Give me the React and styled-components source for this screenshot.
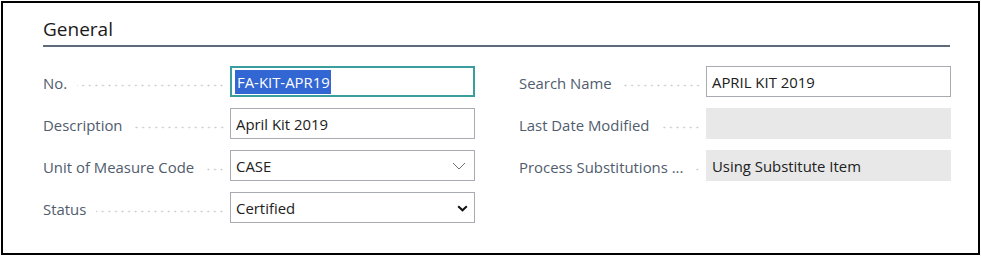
import React from "react";
import styled, { createGlobalStyle } from "styled-components";

const Global = createGlobalStyle`
  html, body { margin: 0; padding: 0; background: #fff; }
  body { font-family: "Open Sans", "Noto Sans", sans-serif; }
`;

const Frame = styled.div`
  box-sizing: border-box;
  margin: 1px;
  width: 979px;
  height: 254px;
  border: 2px solid #000;
  background: #fff;
  padding: 14px 28px 0 40px;
`;

const Heading = styled.h2`
  margin: 0;
  font-size: 19px;
  font-weight: 400;
  color: #1a1a1a;
  line-height: 25px;
  padding-bottom: 3px;
  border-bottom: 2px solid #5f6b7a;
`;

const Columns = styled.div`
  display: grid;
  grid-template-columns: 432px 432px;
  column-gap: 44px;
  padding-top: 19px;
`;

const Column = styled.div`
  display: flex;
  flex-direction: column;
  gap: 11px;
`;

const Row = styled.div`
  display: flex;
  align-items: center;
  height: 31px;
`;

const Label = styled.div`
  width: 187px;
  flex: none;
  display: flex;
  align-items: center;
  font-size: 14.9px;
  color: #505c6d;
  white-space: nowrap;
  padding-right: 5px;
  padding-top: 3px;
  box-sizing: border-box;
`;

const Dots = styled.span`
  flex: 1;
  height: 3px;
  margin-left: 10px;
  margin-top: 4px;
  background-image: radial-gradient(circle, #c4c8cd 0.8px, transparent 1.1px);
  background-size: 6.6px 3px;
  background-repeat: repeat-x;
  background-position: right center;
`;

const Field = styled.div`
  box-sizing: border-box;
  width: 245px;
  height: 31px;
  flex: none;
  display: flex;
  align-items: center;
  padding: 1px 6px 0 6px;
  font-size: 14.9px;
  color: #212121;
  background: ${(p) => (p.$readonly ? "#e8e8e8" : "#fff")};
  border: ${(p) =>
    p.$focus ? "2px solid #3a9e9e" : p.$readonly ? "1px solid #e8e8e8" : "1px solid #a8acb2"};
  padding-left: ${(p) => (p.$focus ? "3px" : "5px")};
  white-space: nowrap;
`;

const Value = styled.span`
  flex: 1;
`;

const Selected = styled.span`
  background: #3166d3;
  color: #fff;
  padding: 2px 1px 2px 2px;
`;

const Chevron = styled.svg`
  flex: none;
  margin-right: ${(p) => p.$mr}px;
`;

function LightChevron() {
  return (
    <Chevron $mr={2} width="14" height="8" viewBox="0 0 14 8">
      <path d="M1 1 L7 7 L13 1" fill="none" stroke="#707070" strokeWidth="1" />
    </Chevron>
  );
}

function BoldChevron() {
  return (
    <Chevron $mr={0} width="11" height="7" viewBox="0 0 11 7">
      <path d="M1.2 1.2 L5.5 5.3 L9.8 1.2" fill="none" stroke="#111" strokeWidth="2" />
    </Chevron>
  );
}

function FormRow({ label, children }) {
  return (
    <Row>
      <Label>
        {label}
        <Dots />
      </Label>
      {children}
    </Row>
  );
}

export default function App() {
  return (
    <>
      <Global />
      <Frame>
        <Heading>General</Heading>
        <Columns>
          <Column>
            <FormRow label="No.">
              <Field $focus>
                <Value>
                  <Selected>FA-KIT-APR19</Selected>
                </Value>
              </Field>
            </FormRow>
            <FormRow label="Description">
              <Field>
                <Value>April Kit 2019</Value>
              </Field>
            </FormRow>
            <FormRow label="Unit of Measure Code">
              <Field>
                <Value>CASE</Value>
                <LightChevron />
              </Field>
            </FormRow>
            <FormRow label="Status">
              <Field>
                <Value>Certified</Value>
                <BoldChevron />
              </Field>
            </FormRow>
          </Column>
          <Column>
            <FormRow label="Search Name">
              <Field>
                <Value>APRIL KIT 2019</Value>
              </Field>
            </FormRow>
            <FormRow label="Last Date Modified">
              <Field $readonly>
                <Value />
              </Field>
            </FormRow>
            <FormRow label="Process Substitutions ...">
              <Field $readonly>
                <Value>Using Substitute Item</Value>
              </Field>
            </FormRow>
          </Column>
        </Columns>
      </Frame>
    </>
  );
}
